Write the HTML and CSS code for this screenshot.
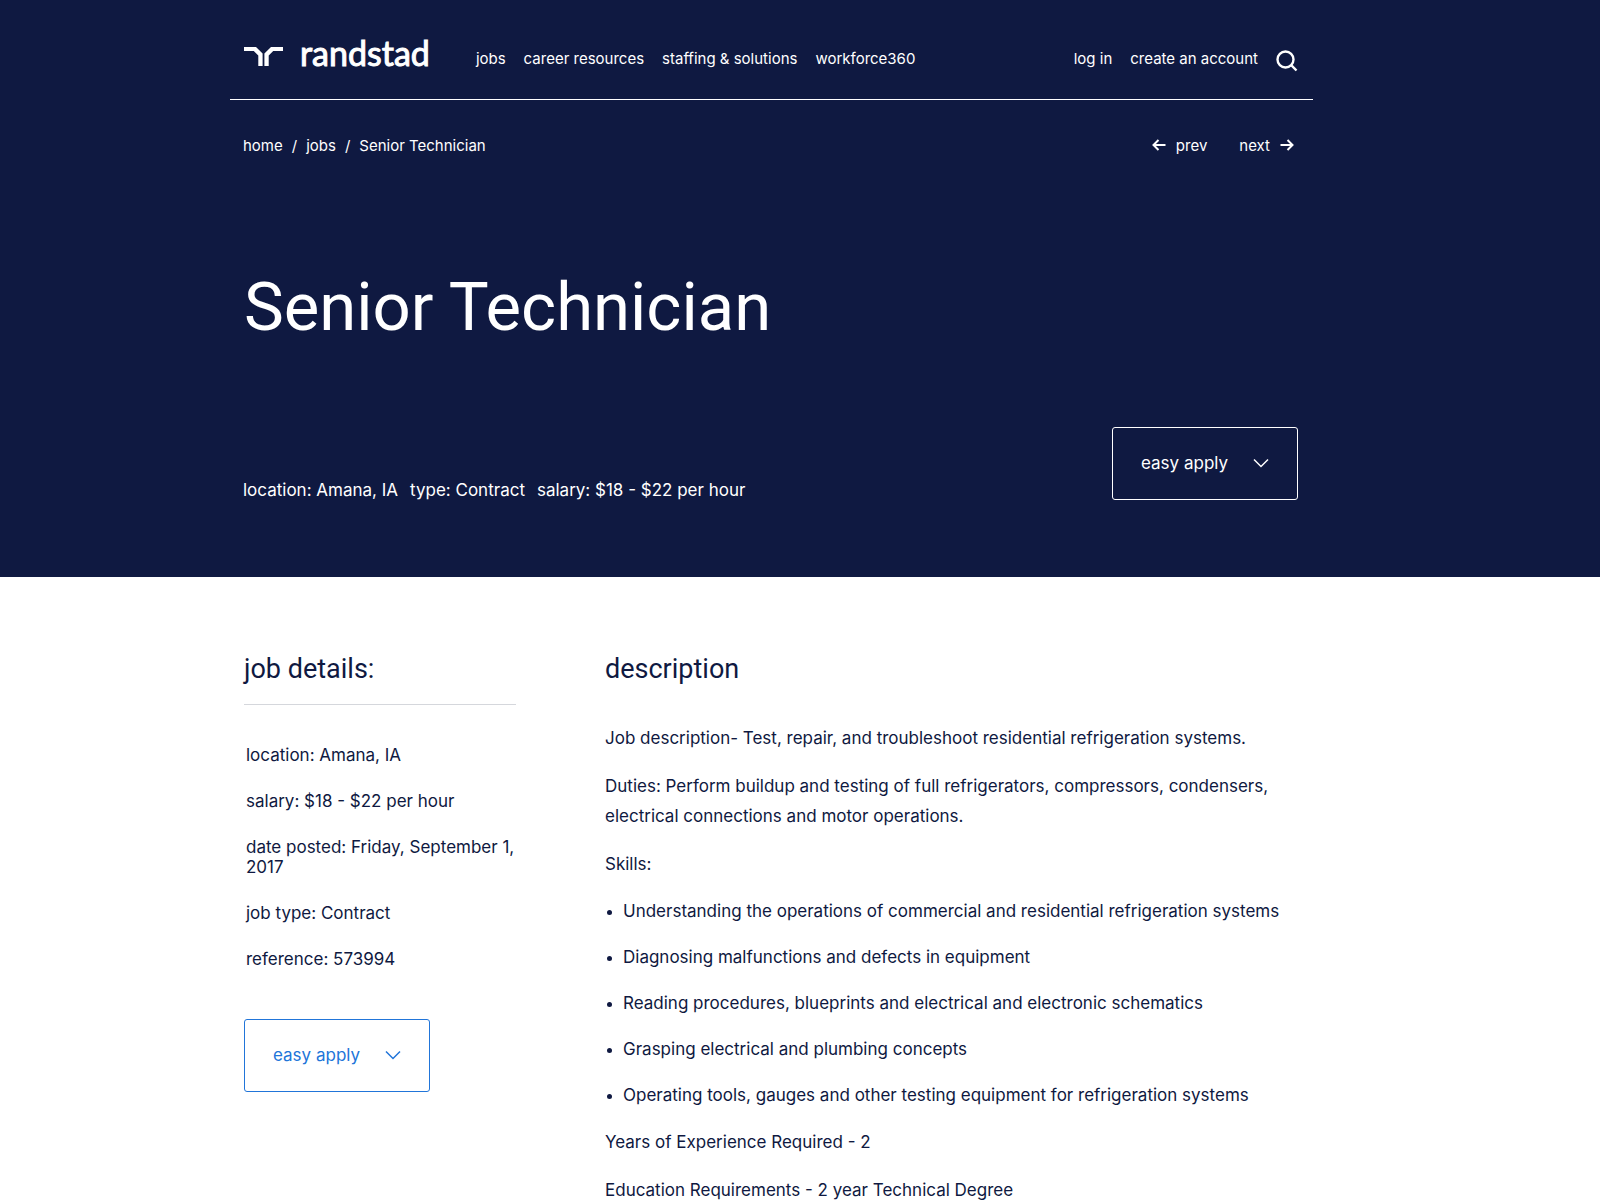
FILE: index.html
```html
<!DOCTYPE html>
<html lang="en">
<head>
<meta charset="utf-8">
<meta name="viewport" content="width=device-width, initial-scale=1">
<title>Senior Technician | randstad</title>
<link rel="stylesheet" href="styles.css">
</head>
<body>
<div class="hero">
  <div class="container">
    <header class="header">
      <a class="logo" href="#">
        <svg class="logo-mark" width="39" height="20" viewBox="0 0 39 20" fill="#fff" aria-hidden="true">
          <path d="M0 0H12L18.600 6.600V19H14.300V8.500L9.800 4H0Z"/>
          <path d="M39 0H27L20.400 6.600V19H24.700V8.500L29.200 4H39Z"/>
        </svg>
        <span class="logo-text">randstad</span>
      </a>
      <nav class="nav">
        <a href="#">jobs</a>
        <a href="#">career resources</a>
        <a href="#">staffing &amp; solutions</a>
        <a href="#">workforce360</a>
      </nav>
      <div class="nav account">
        <a href="#">log in</a>
        <a href="#">create an account</a>
        <button class="search" type="button" aria-label="search">
          <svg width="22" height="22" viewBox="0 0 22 22" fill="none" stroke="#fff" stroke-width="2.400"><circle cx="9.500" cy="9.500" r="8"/><path d="M15.200 15.200L20.500 20.500"/></svg>
        </button>
      </div>
    </header>
    <div class="subnav">
      <nav class="breadcrumb" aria-label="breadcrumb">
        <a href="#">home</a><span class="slash">/</span><a href="#">jobs</a><span class="slash">/</span><span>Senior Technician</span>
      </nav>
      <div class="pager">
        <a href="#"><svg width="14" height="14" viewBox="0 0 14 14" fill="none" stroke="#fff" stroke-width="2"><path d="M13.500 6H1.500M6.500 1L1.500 6L6.500 11"/></svg>prev</a>
        <a href="#">next<svg width="14" height="14" viewBox="0 0 14 14" fill="none" stroke="#fff" stroke-width="2"><path d="M.5 6H12.500M7.500 1L12.500 6L7.500 11"/></svg></a>
      </div>
    </div>
    <h1 class="title">Senior Technician</h1>
    <div class="summary">
      <div class="meta">
        <span>location: Amana, IA</span>
        <span>type: Contract</span>
        <span>salary: $18 - $22 per hour</span>
      </div>
      <button class="apply" type="button">easy apply
        <svg width="16" height="10" viewBox="0 0 16 10" fill="none" stroke="currentColor" stroke-width="1.500"><path d="M1 1.500L8 8.500L15 1.500"/></svg>
      </button>
    </div>
  </div>
</div>
<main class="page">
  <div class="container columns">
    <aside class="details">
      <h2>job details:</h2>
      <ul class="facts">
        <li>location: Amana, IA</li>
        <li>salary: $18 - $22 per hour</li>
        <li>date posted: Friday, September 1, 2017</li>
        <li>job type: Contract</li>
        <li>reference: 573994</li>
      </ul>
      <button class="apply apply-blue" type="button">easy apply
        <svg width="16" height="10" viewBox="0 0 16 10" fill="none" stroke="currentColor" stroke-width="1.500"><path d="M1 1.500L8 8.500L15 1.500"/></svg>
      </button>
    </aside>
    <section class="description">
      <h2>description</h2>
      <p>Job description- Test, repair, and troubleshoot residential refrigeration systems.</p>
      <p>Duties: Perform buildup and testing of full refrigerators, compressors, condensers, electrical connections and motor operations.</p>
      <p>Skills:</p>
      <ul class="skills">
        <li>Understanding the operations of commercial and residential refrigeration systems</li>
        <li>Diagnosing malfunctions and defects in equipment</li>
        <li>Reading procedures, blueprints and electrical and electronic schematics</li>
        <li>Grasping electrical and plumbing concepts</li>
        <li>Operating tools, gauges and other testing equipment for refrigeration systems</li>
      </ul>
      <p>Years of Experience Required - 2</p>
      <p>Education Requirements - 2 year Technical Degree</p>
    </section>
  </div>
</main>
</body>
</html>
```
FILE: styles.css
```css
* { box-sizing: border-box; }
body {
  margin: 0;
  background: #fff;
  color: #0f1941;
  font: 17px/20px Inter, "Liberation Sans", sans-serif;
}
h1, h2, p, ul { margin: 0; padding: 0; font-weight: 400; }
ul { list-style: none; }
a { color: inherit; text-decoration: none; }
button { font: inherit; color: inherit; background: none; border: 0; padding: 0; cursor: pointer; }
svg { display: block; flex: none; }

.hero { background: #0f1941; color: #fff; padding-right: 57px; }
.page { padding-right: 57px; overflow: hidden; }
.container { max-width: 1083px; margin: 0 auto; }

.header {
  display: flex;
  align-items: center;
  height: 100px;
  padding: 19px 15px 0 14px;
  border-bottom: 1px solid #fff;
  font-size: 15px;
}
.logo { display: flex; align-items: center; gap: 17px; margin: -13px 46px 0 0; }
.logo-mark { margin-top: 9px; }
.logo-text { font: 34px/40px Lato, sans-serif; -webkit-text-stroke: 1px #fff; }
.nav { display: flex; align-items: center; gap: 18px; }
.account { margin-left: auto; }
.search { margin-top: 4px; }

.subnav {
  display: flex;
  justify-content: space-between;
  padding: 36px 19px 0 13px;
  font-size: 15px;
}
.breadcrumb { display: flex; }
.slash { margin: 0 9px; }
.pager { display: flex; gap: 32px; }
.pager a { display: flex; align-items: center; gap: 10px; }

.title {
  padding: 99px 14px 0;
  font: 67px/104px Roboto, sans-serif;
}
.summary {
  display: flex;
  align-items: flex-end;
  justify-content: space-between;
  padding: 68px 15px 77px 13px;
}
.meta { display: flex; flex-wrap: wrap; gap: 12px; }
.apply {
  display: flex;
  align-items: center;
  justify-content: space-between;
  width: 186px;
  height: 73px;
  padding: 0 28px 2px;
  border: 1px solid #fff;
  border-radius: 3px;
}
.apply-blue { color: #2175d9; border-color: #2175d9; }

.columns {
  display: grid;
  grid-template-columns: 272px 1fr;
  column-gap: 89px;
  padding: 72px 14px 0 14px;
}
h2 { font: 27px/40px Roboto, sans-serif; }
.details h2 { padding-bottom: 15px; border-bottom: 1px solid #d5d7dc; }
.facts { display: flex; flex-direction: column; gap: 26px; padding: 40px 0 50px 2px; }
.description h2 { margin-bottom: 34px; }
.description p { line-height: 30px; margin-bottom: 18px; }
.skills { display: flex; flex-direction: column; gap: 26px; padding: 4px 0 22px 18px; list-style: disc; }
.skills li::marker { font-size: 14px; }
```
